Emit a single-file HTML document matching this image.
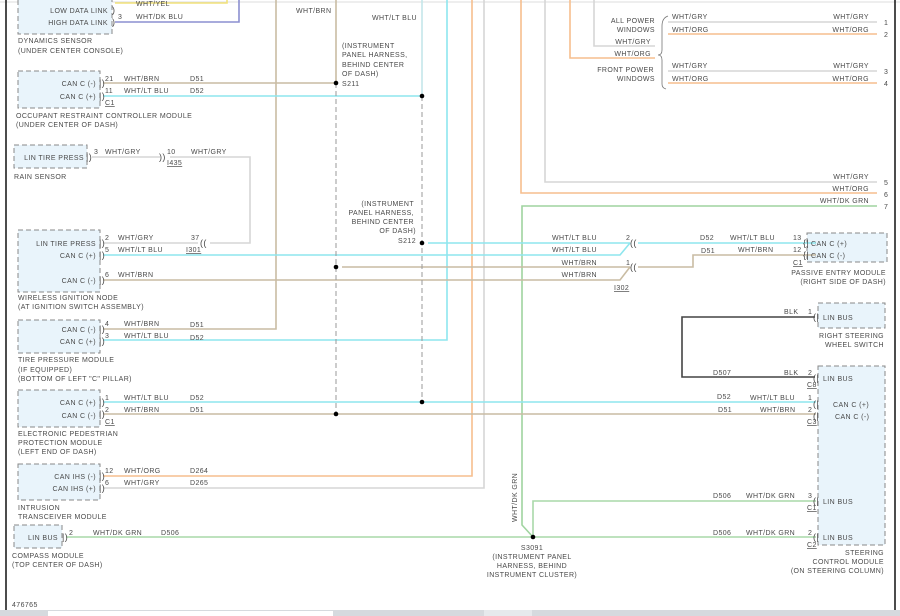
<!DOCTYPE html>
<html><head><meta charset="utf-8"><style>
html,body{margin:0;padding:0;background:#fff;width:900px;height:616px;overflow:hidden}
svg text{font-family:"Liberation Sans",sans-serif;font-size:7px;fill:#4a4a4a;letter-spacing:0.4px}
</style></head><body>
<svg width="900" height="616" viewBox="0 0 900 616" xmlns="http://www.w3.org/2000/svg">
<rect width="900" height="616" fill="#fff"/>
<line x1="0" y1="2" x2="900" y2="2" stroke="#ddd" stroke-width="1"/>
<line x1="6" y1="0" x2="6" y2="610" stroke="#111" stroke-width="1.5"/>
<line x1="895" y1="0" x2="895" y2="610" stroke="#111" stroke-width="1.5"/>
<rect x="0" y="610" width="900" height="6" fill="#d6dade"/>
<rect x="48" y="611" width="285" height="5" fill="#fff"/>
<rect x="484" y="610" width="48" height="6" fill="#e6e9ec"/>

<g fill="#e9f4fb" stroke="#888" stroke-width="1" stroke-dasharray="5,3">
<rect x="18" y="-5" width="94" height="39"/>
<rect x="18" y="71" width="82" height="37"/>
<rect x="14" y="145" width="73" height="23"/>
<rect x="18" y="230" width="82" height="62"/>
<rect x="18" y="320" width="82" height="33"/>
<rect x="18" y="390" width="82" height="37"/>
<rect x="18" y="464" width="82" height="36"/>
<rect x="14" y="525" width="48" height="23"/>
<rect x="807" y="233" width="80" height="29"/>
<rect x="818" y="303" width="67" height="25"/>
<rect x="818" y="366" width="67" height="179"/>
</g>

<g fill="none" stroke-width="1.6">
<polyline points="115,3 227,3 227,0" stroke="#f2e27a"/>
<polyline points="115,22 239,22 239,0" stroke="#8c8fd0"/>
<polyline points="103,329 276,329 276,0" stroke="#c9bca3"/>
<polyline points="103,83 336,83 336,0" stroke="#c9bca3"/>
<polyline points="103,340 447,340 447,0" stroke="#8ee6ee"/>
<line x1="103" y1="96" x2="422" y2="96" stroke="#8ee6ee"/>
<line x1="422" y1="0" x2="422" y2="96" stroke="#c4e6ea"/>
<polyline points="103,476 472,476 472,0" stroke="#f6be8e"/>
<polyline points="103,488 484,488 484,0" stroke="#d6d6d6"/>
<polyline points="521,0 521,193 877,193" stroke="#f6be8e"/>
<polyline points="545,0 545,182 877,182" stroke="#d6d6d6"/>
<polyline points="570,0 570,58 655,58" stroke="#f6be8e"/>
<polyline points="594,0 594,46 655,46" stroke="#d6d6d6"/>
<line x1="668" y1="22" x2="877" y2="22" stroke="#d6d6d6"/>
<line x1="668" y1="34" x2="877" y2="34" stroke="#f6be8e"/>
<line x1="668" y1="71" x2="877" y2="71" stroke="#d6d6d6"/>
<line x1="668" y1="83" x2="877" y2="83" stroke="#f6be8e"/>
<polyline points="877,206 522,206 522,525 533,537" stroke="#9fd49f"/>
<line x1="66" y1="537" x2="816" y2="537" stroke="#a9d8a9"/>
<polyline points="533,537 533,501 816,501" stroke="#a9d8a9"/>
<line x1="92" y1="157" x2="160" y2="157" stroke="#d6d6d6"/>
<polyline points="170,157 250,157 250,243 210,243" stroke="#d6d6d6"/>
<line x1="103" y1="243" x2="198" y2="243" stroke="#d6d6d6"/>
<polyline points="103,255 620,255 630,243" stroke="#8ee6ee"/>
<line x1="428" y1="243" x2="630" y2="243" stroke="#8ee6ee"/>
<polyline points="103,280 620,280 630,267" stroke="#c9bca3"/>
<line x1="342" y1="267" x2="630" y2="267" stroke="#c9bca3"/>
<line x1="638" y1="243" x2="816" y2="243" stroke="#8ee6ee"/>
<polyline points="638,267 693,267 693,255 816,255" stroke="#c9bca3"/>
<line x1="103" y1="402" x2="816" y2="402" stroke="#8ee6ee"/>
<line x1="103" y1="414" x2="816" y2="414" stroke="#c9bca3"/>
<polyline points="815,317 682,317 682,377 815,377" stroke="#444"/>
<line x1="336" y1="83" x2="336" y2="414" stroke="#999" stroke-width="1" stroke-dasharray="5,3"/>
<line x1="422" y1="96" x2="422" y2="402" stroke="#999" stroke-width="1" stroke-dasharray="5,3"/>
<path d="M668,16 Q662,18 662,26 L662,50 Q662,55 658,55 Q662,55 662,60 L662,84 Q662,88 666,89" stroke="#777" stroke-width="0.8"/>
</g>
<g fill="#000">
<circle cx="336" cy="83" r="2.3"/><circle cx="422" cy="96" r="2.3"/>
<circle cx="422" cy="243" r="2.3"/><circle cx="336" cy="267" r="2.3"/>
<circle cx="422" cy="402" r="2.3"/><circle cx="336" cy="414" r="2.3"/>
<circle cx="533" cy="537" r="2.3"/>
</g>

<g>
<text x="112" y="13" style="font-size:9px">)</text><text x="112" y="25" style="font-size:9px">)</text>
<text x="99" y="86" style="font-size:9px">|)</text><text x="99" y="99" style="font-size:9px">|)</text>
<text x="86" y="160" style="font-size:9px">|)</text>
<text x="159" y="160" style="font-size:9px">))</text>
<text x="200" y="246" style="font-size:9px">((</text>
<text x="99" y="246" style="font-size:9px">|)</text><text x="99" y="258" style="font-size:9px">|)</text><text x="99" y="283" style="font-size:9px">|)</text>
<text x="99" y="332" style="font-size:9px">|)</text><text x="99" y="344" style="font-size:9px">|)</text>
<text x="99" y="405" style="font-size:9px">|)</text><text x="99" y="417" style="font-size:9px">|)</text>
<text x="99" y="479" style="font-size:9px">|)</text><text x="99" y="491" style="font-size:9px">|)</text>
<text x="62" y="540" style="font-size:9px">|)</text>
<text x="630" y="246" style="font-size:9px">((</text><text x="630" y="270" style="font-size:9px">((</text>
<text x="803" y="246" style="font-size:9px">{|</text><text x="803" y="258" style="font-size:9px">{|</text>
<text x="813" y="320" style="font-size:9px">(|</text><text x="813" y="381" style="font-size:9px">(|</text>
<text x="813" y="407" style="font-size:9px">(|</text><text x="813" y="419" style="font-size:9px">(|</text>
<text x="813" y="504" style="font-size:9px">(|</text><text x="813" y="540" style="font-size:9px">(|</text>
</g>

<g>
<text x="136" y="6">WHT/YEL</text>
<text x="118" y="19">3</text><text x="136" y="19">WHT/DK BLU</text>
<text x="108" y="13" text-anchor="end">LOW DATA LINK</text>
<text x="108" y="25" text-anchor="end">HIGH DATA LINK</text>
<text x="18" y="43">DYNAMICS SENSOR</text>
<text x="18" y="53">(UNDER CENTER CONSOLE)</text>
<text x="296" y="13">WHT/BRN</text>
<text x="372" y="20">WHT/LT BLU</text>
<text x="342" y="48">(INSTRUMENT</text>
<text x="342" y="57">PANEL HARNESS,</text>
<text x="342" y="67">BEHIND CENTER</text>
<text x="342" y="76">OF DASH)</text>
<text x="342" y="86">S211</text>

<text x="96" y="86" text-anchor="end">CAN C (-)</text>
<text x="96" y="99" text-anchor="end">CAN C (+)</text>
<text x="105" y="81">21</text><text x="124" y="81">WHT/BRN</text><text x="190" y="81">D51</text>
<text x="105" y="93">11</text><text x="124" y="93">WHT/LT BLU</text><text x="190" y="93">D52</text>
<text x="105" y="105" text-decoration="underline">C1</text>
<text x="16" y="118">OCCUPANT RESTRAINT CONTROLLER MODULE</text>
<text x="16" y="127">(UNDER CENTER OF DASH)</text>

<text x="84" y="160" text-anchor="end">LIN TIRE PRESS</text>
<text x="94" y="154">3</text><text x="105" y="154">WHT/GRY</text>
<text x="167" y="154">10</text><text x="191" y="154">WHT/GRY</text>
<text x="167" y="165" text-decoration="underline">I435</text>
<text x="14" y="179">RAIN SENSOR</text>

<text x="96" y="246" text-anchor="end">LIN TIRE PRESS</text>
<text x="96" y="258" text-anchor="end">CAN C (+)</text>
<text x="96" y="283" text-anchor="end">CAN C (-)</text>
<text x="105" y="240">2</text><text x="118" y="240">WHT/GRY</text><text x="191" y="240">37</text>
<text x="105" y="252">5</text><text x="118" y="252">WHT/LT BLU</text><text x="186" y="252" text-decoration="underline">I301</text>
<text x="105" y="277">6</text><text x="118" y="277">WHT/BRN</text>
<text x="18" y="300">WIRELESS IGNITION NODE</text>
<text x="18" y="309">(AT IGNITION SWITCH ASSEMBLY)</text>

<text x="414" y="206" text-anchor="end">(INSTRUMENT</text>
<text x="414" y="215" text-anchor="end">PANEL HARNESS,</text>
<text x="414" y="224" text-anchor="end">BEHIND CENTER</text>
<text x="416" y="233" text-anchor="end">OF DASH)</text>
<text x="416" y="243" text-anchor="end">S212</text>

<text x="96" y="332" text-anchor="end">CAN C (-)</text>
<text x="96" y="344" text-anchor="end">CAN C (+)</text>
<text x="105" y="326">4</text><text x="124" y="326">WHT/BRN</text><text x="190" y="327">D51</text>
<text x="105" y="338">3</text><text x="124" y="338">WHT/LT BLU</text><text x="190" y="340">D52</text>
<text x="18" y="362">TIRE PRESSURE MODULE</text>
<text x="18" y="372">(IF EQUIPPED)</text>
<text x="18" y="381">(BOTTOM OF LEFT "C" PILLAR)</text>

<text x="96" y="405" text-anchor="end">CAN C (+)</text>
<text x="96" y="418" text-anchor="end">CAN C (-)</text>
<text x="105" y="400">1</text><text x="124" y="400">WHT/LT BLU</text><text x="190" y="400">D52</text>
<text x="105" y="412">2</text><text x="124" y="412">WHT/BRN</text><text x="190" y="412">D51</text>
<text x="105" y="424" text-decoration="underline">C1</text>
<text x="18" y="436">ELECTRONIC PEDESTRIAN</text>
<text x="18" y="445">PROTECTION MODULE</text>
<text x="18" y="454">(LEFT END OF DASH)</text>

<text x="96" y="479" text-anchor="end">CAN IHS (-)</text>
<text x="96" y="491" text-anchor="end">CAN IHS (+)</text>
<text x="105" y="473">12</text><text x="124" y="473">WHT/ORG</text><text x="190" y="473">D264</text>
<text x="105" y="485">6</text><text x="124" y="485">WHT/GRY</text><text x="190" y="485">D265</text>
<text x="18" y="510">INTRUSION</text>
<text x="18" y="519">TRANSCEIVER MODULE</text>

<text x="58" y="540" text-anchor="end">LIN BUS</text>
<text x="69" y="535">2</text><text x="93" y="535">WHT/DK GRN</text><text x="161" y="535">D506</text>
<text x="12" y="558">COMPASS MODULE</text>
<text x="12" y="567">(TOP CENTER OF DASH)</text>
<text x="12" y="607">476765</text>

<text x="655" y="23" text-anchor="end">ALL POWER</text>
<text x="655" y="32" text-anchor="end">WINDOWS</text>
<text x="651" y="44" text-anchor="end">WHT/GRY</text>
<text x="651" y="56" text-anchor="end">WHT/ORG</text>
<text x="654" y="72" text-anchor="end">FRONT POWER</text>
<text x="655" y="81" text-anchor="end">WINDOWS</text>
<text x="672" y="19">WHT/GRY</text><text x="869" y="19" text-anchor="end">WHT/GRY</text>
<text x="672" y="32">WHT/ORG</text><text x="869" y="32" text-anchor="end">WHT/ORG</text>
<text x="672" y="68">WHT/GRY</text><text x="869" y="68" text-anchor="end">WHT/GRY</text>
<text x="672" y="81">WHT/ORG</text><text x="869" y="81" text-anchor="end">WHT/ORG</text>
<text x="869" y="179" text-anchor="end">WHT/GRY</text>
<text x="869" y="191" text-anchor="end">WHT/ORG</text>
<text x="869" y="203" text-anchor="end">WHT/DK GRN</text>
<text x="884" y="25">1</text><text x="884" y="37">2</text><text x="884" y="74">3</text><text x="884" y="86">4</text>
<text x="884" y="185">5</text><text x="884" y="197">6</text><text x="884" y="209">7</text>

<text x="597" y="240" text-anchor="end">WHT/LT BLU</text>
<text x="597" y="252" text-anchor="end">WHT/LT BLU</text>
<text x="597" y="265" text-anchor="end">WHT/BRN</text>
<text x="597" y="277" text-anchor="end">WHT/BRN</text>
<text x="626" y="240">2</text><text x="626" y="265">1</text>
<text x="614" y="290" text-decoration="underline">I302</text>
<text x="700" y="240">D52</text><text x="730" y="240">WHT/LT BLU</text><text x="793" y="240">13</text>
<text x="701" y="253">D51</text><text x="738" y="252">WHT/BRN</text><text x="793" y="252">12</text>
<text x="811" y="246">CAN C (+)</text><text x="811" y="258">CAN C (-)</text>
<text x="793" y="265" text-decoration="underline">C1</text>
<text x="886" y="275" text-anchor="end">PASSIVE ENTRY MODULE</text>
<text x="886" y="284" text-anchor="end">(RIGHT SIDE OF DASH)</text>

<text x="784" y="314">BLK</text><text x="808" y="314">1</text>
<text x="823" y="320">LIN BUS</text>
<text x="884" y="338" text-anchor="end">RIGHT STEERING</text>
<text x="884" y="347" text-anchor="end">WHEEL SWITCH</text>
<text x="713" y="375">D507</text><text x="784" y="375">BLK</text><text x="808" y="375">2</text>
<text x="807" y="387" text-decoration="underline">C8</text>
<text x="823" y="381">LIN BUS</text>
<text x="717" y="399">D52</text><text x="750" y="400">WHT/LT BLU</text><text x="808" y="400">1</text>
<text x="718" y="412">D51</text><text x="760" y="412">WHT/BRN</text><text x="808" y="412">2</text>
<text x="807" y="424" text-decoration="underline">C3</text>
<text x="833" y="407">CAN C (+)</text><text x="835" y="419">CAN C (-)</text>
<text x="713" y="498">D506</text><text x="746" y="498">WHT/DK GRN</text><text x="808" y="498">3</text>
<text x="807" y="510" text-decoration="underline">C1</text>
<text x="823" y="504">LIN BUS</text>
<text x="713" y="535">D506</text><text x="746" y="535">WHT/DK GRN</text><text x="808" y="535">2</text>
<text x="807" y="547" text-decoration="underline">C2</text>
<text x="823" y="540">LIN BUS</text>
<text x="884" y="555" text-anchor="end">STEERING</text>
<text x="884" y="564" text-anchor="end">CONTROL MODULE</text>
<text x="884" y="573" text-anchor="end">(ON STEERING COLUMN)</text>

<text x="517" y="522" transform="rotate(-90 517 522)">WHT/DK GRN</text>
<text x="532" y="550" text-anchor="middle">S3091</text>
<text x="532" y="559" text-anchor="middle">(INSTRUMENT PANEL</text>
<text x="532" y="568" text-anchor="middle">HARNESS, BEHIND</text>
<text x="532" y="577" text-anchor="middle">INSTRUMENT CLUSTER)</text>
</g>
</svg>
</body></html>
